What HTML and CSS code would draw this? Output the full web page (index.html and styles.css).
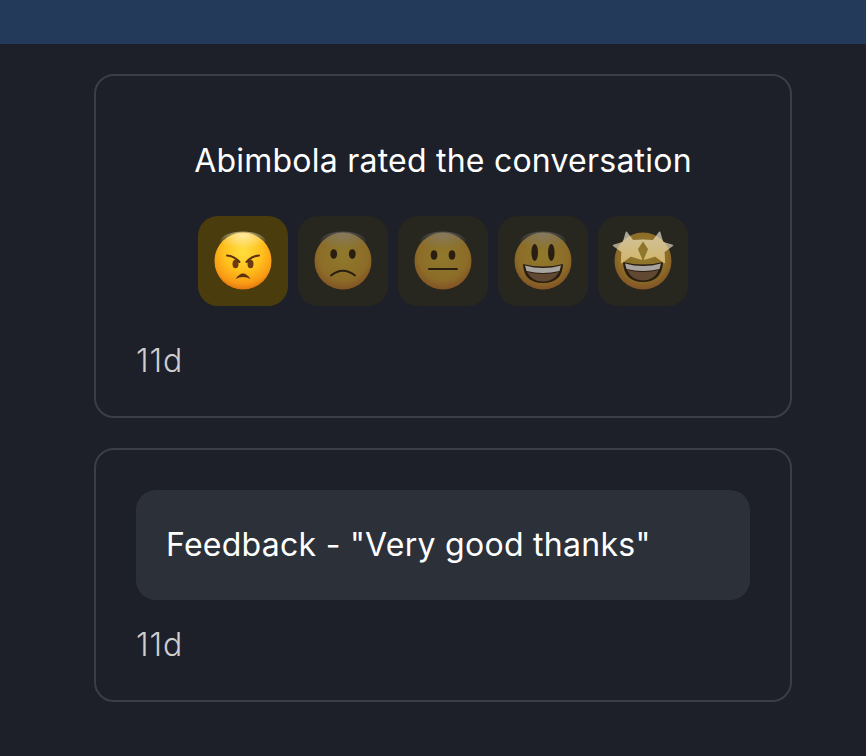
FILE: index.html
```html
<!DOCTYPE html>
<html lang="en">
<head>
<meta charset="utf-8">
<title>Conversation rating</title>
<link rel="stylesheet" href="styles.css">
</head>
<body>
<header class="topbar"></header>
<main class="feed">
  <section class="card">
    <h2 class="title">Abimbola rated the conversation</h2>
    <div class="ratings">
      <div class="tile tile-active">
        <svg class="emoji" viewBox="0 0 60 60">
          <defs>
            <radialGradient id="face" cx="50%" cy="34%" r="68%">
              <stop offset="0" stop-color="#ffdf3f"/>
              <stop offset=".5" stop-color="#ffc01c"/>
              <stop offset=".82" stop-color="#f89a14"/>
              <stop offset="1" stop-color="#df6f10"/>
            </radialGradient>
            <radialGradient id="face-dim" cx="50%" cy="40%" r="62%">
              <stop offset="0" stop-color="#f8cc3a"/>
              <stop offset=".7" stop-color="#f2b232"/>
              <stop offset="1" stop-color="#da7a2c"/>
            </radialGradient>
            <radialGradient id="shine" cx="50%" cy="20%" r="62%">
              <stop offset="0" stop-color="#fff6c8" stop-opacity=".75"/>
              <stop offset="1" stop-color="#fff6c8" stop-opacity="0"/>
            </radialGradient>
            <radialGradient id="shine-dim" cx="50%" cy="15%" r="70%">
              <stop offset="0" stop-color="#d8d8e0" stop-opacity=".6"/>
              <stop offset="1" stop-color="#d8d8e0" stop-opacity="0"/>
            </radialGradient>
            <linearGradient id="star" x1="0" y1="0" x2="0" y2="1">
              <stop offset="0" stop-color="#fffdf0"/>
              <stop offset="1" stop-color="#ffe49a"/>
            </linearGradient>
          </defs>
          <circle cx="30" cy="30" r="28.500" fill="url(#face)"/>
          <ellipse cx="30" cy="11" rx="23" ry="10.500" fill="url(#shine)"/>
          <ellipse cx="22.500" cy="33" rx="3" ry="4.200" fill="#6b3a12"/>
          <ellipse cx="37.500" cy="33" rx="3" ry="4.200" fill="#6b3a12"/>
          <path d="M14 24.500Q21 25 26.500 31M46 24.500Q39 25 33.500 31" fill="none" stroke="#5c300e" stroke-width="2" stroke-linecap="round"/>
          <path d="M22.500 48Q30 37 37.500 48Q30 44 22.500 48Z" fill="#5c300e"/>
        </svg>
      </div>
      <div class="tile">
        <svg class="emoji" viewBox="0 0 60 60">
          <g class="dim">
            <circle cx="30" cy="30" r="28.500" fill="url(#face-dim)"/>
            <ellipse cx="30" cy="11" rx="23" ry="10.500" fill="url(#shine-dim)"/>
            <ellipse cx="20.700" cy="23" rx="3.400" ry="4.800" fill="#2c1604"/>
            <ellipse cx="39.300" cy="23" rx="3.400" ry="4.800" fill="#2c1604"/>
            <path d="M18 44.500Q30 35 42 44.500" fill="none" stroke="#2c1604" stroke-width="2" stroke-linecap="round"/>
          </g>
        </svg>
      </div>
      <div class="tile">
        <svg class="emoji" viewBox="0 0 60 60">
          <g class="dim">
            <circle cx="30" cy="30" r="28.500" fill="url(#face-dim)"/>
            <ellipse cx="30" cy="11" rx="23" ry="10.500" fill="url(#shine-dim)"/>
            <ellipse cx="21" cy="24" rx="3.400" ry="4.800" fill="#2c1604"/>
            <ellipse cx="39" cy="24" rx="3.400" ry="4.800" fill="#2c1604"/>
            <path d="M16 38H44" fill="none" stroke="#2c1604" stroke-width="2" stroke-linecap="round"/>
          </g>
        </svg>
      </div>
      <div class="tile">
        <svg class="emoji" viewBox="0 0 60 60">
          <g class="dim">
            <circle cx="30" cy="30" r="28.500" fill="url(#face-dim)"/>
            <ellipse cx="30" cy="11" rx="23" ry="10.500" fill="url(#shine-dim)"/>
            <ellipse cx="21.700" cy="21.500" rx="3.300" ry="8.500" fill="#2c1604"/>
            <ellipse cx="38.300" cy="21.500" rx="3.300" ry="8.500" fill="#2c1604"/>
            <path d="M10 33Q30 38 50 33Q49.500 52 30 52Q10.500 52 10 33Z" fill="#2c1604"/>
            <path d="M14 41Q30 45 46 41Q41 50.500 30 50.500Q19 50.500 14 41Z" fill="#9a6a48"/>
          </g>
          <path class="dim-bright" d="M12 34.500Q30 39.500 48 34.500L46.500 40Q30 44 13.500 40Z" fill="#fff"/>
        </svg>
      </div>
      <div class="tile">
        <svg class="emoji" viewBox="0 0 60 60">
          <g class="dim">
            <circle cx="30" cy="30" r="28.500" fill="url(#face-dim)"/>
            <path d="M10 31Q30 36 50 31Q49 51 30 51Q11 51 10 31Z" fill="#2c1604"/>
            <path d="M14 39Q30 43 46 39Q41 49.500 30 49.500Q19 49.500 14 39Z" fill="#9a6a48"/>
          </g>
          <g class="dim-bright">
            <path d="M12 32.500Q30 37.500 48 32.500L46.500 38Q30 42 13.500 38Z" fill="#fff"/>
            <path transform="rotate(-10 16 16)" d="M16 1L20.700 10.500L31 11.700L23.600 19.500L26 30L16 25L6 30L8.400 19.500L1 11.700L11.300 10.500Z" fill="url(#star)" stroke="url(#star)" stroke-width="1.500" stroke-linejoin="round"/>
            <path transform="rotate(10 44 16)" d="M44 1L39.300 10.500L29 11.700L36.400 19.500L34 30L44 25L54 30L51.600 19.500L59 11.700L48.700 10.500Z" fill="url(#star)" stroke="url(#star)" stroke-width="1.500" stroke-linejoin="round"/>
          </g>
        </svg>
      </div>
    </div>
    <time class="stamp">11d</time>
  </section>
  <section class="card">
    <p class="note">Feedback - "Very good thanks"</p>
    <time class="stamp">11d</time>
  </section>
</main>
</body>
</html>
```
FILE: styles.css
```css
* {
  box-sizing: border-box;
}

html,
body {
  height: 100%;
}

body {
  margin: 0;
  overflow: hidden;
  background: #1d2029;
  color: #fff;
  font-family: Inter, "Liberation Sans", sans-serif;
  font-size: 32px;
  line-height: 46px;
}

.topbar {
  height: 44px;
  background: #243a5b;
}

.feed {
  display: flex;
  flex-direction: column;
  gap: 30px;
  width: 698px;
  margin: 30px 0 0 94px;
}

.card {
  display: flex;
  flex-direction: column;
  padding: 40px 40px 32px;
  border: 2px solid #3b3d47;
  border-radius: 20px;
}

.title {
  margin: 22px 0 32px;
  font-size: 32px;
  font-weight: 400;
  letter-spacing: 0.23px;
  line-height: 46px;
  text-align: center;
}

.ratings {
  display: flex;
  justify-content: center;
  gap: 10px;
  margin-bottom: 32px;
}

.tile {
  display: flex;
  align-items: center;
  justify-content: center;
  width: 90px;
  height: 90px;
  border-radius: 20px;
  background: #27261f;
}

.tile-active {
  background: #4a3c0c;
}

.emoji {
  display: block;
  width: 60px;
  height: 60px;
  overflow: visible;
  filter: blur(0.4px);
}

.dim {
  opacity: 0.5;
}

.dim-bright {
  opacity: 0.6;
}

.stamp {
  display: block;
  color: #cfcfcf;
  font-size: 32px;
  font-weight: 300;
  letter-spacing: 0.9px;
  line-height: 46px;
}

.note {
  margin: 0 0 22px;
  padding: 32px 30px;
  border-radius: 20px;
  background: #2c3039;
  font-size: 32px;
  letter-spacing: 0.27px;
  line-height: 46px;
}
```
